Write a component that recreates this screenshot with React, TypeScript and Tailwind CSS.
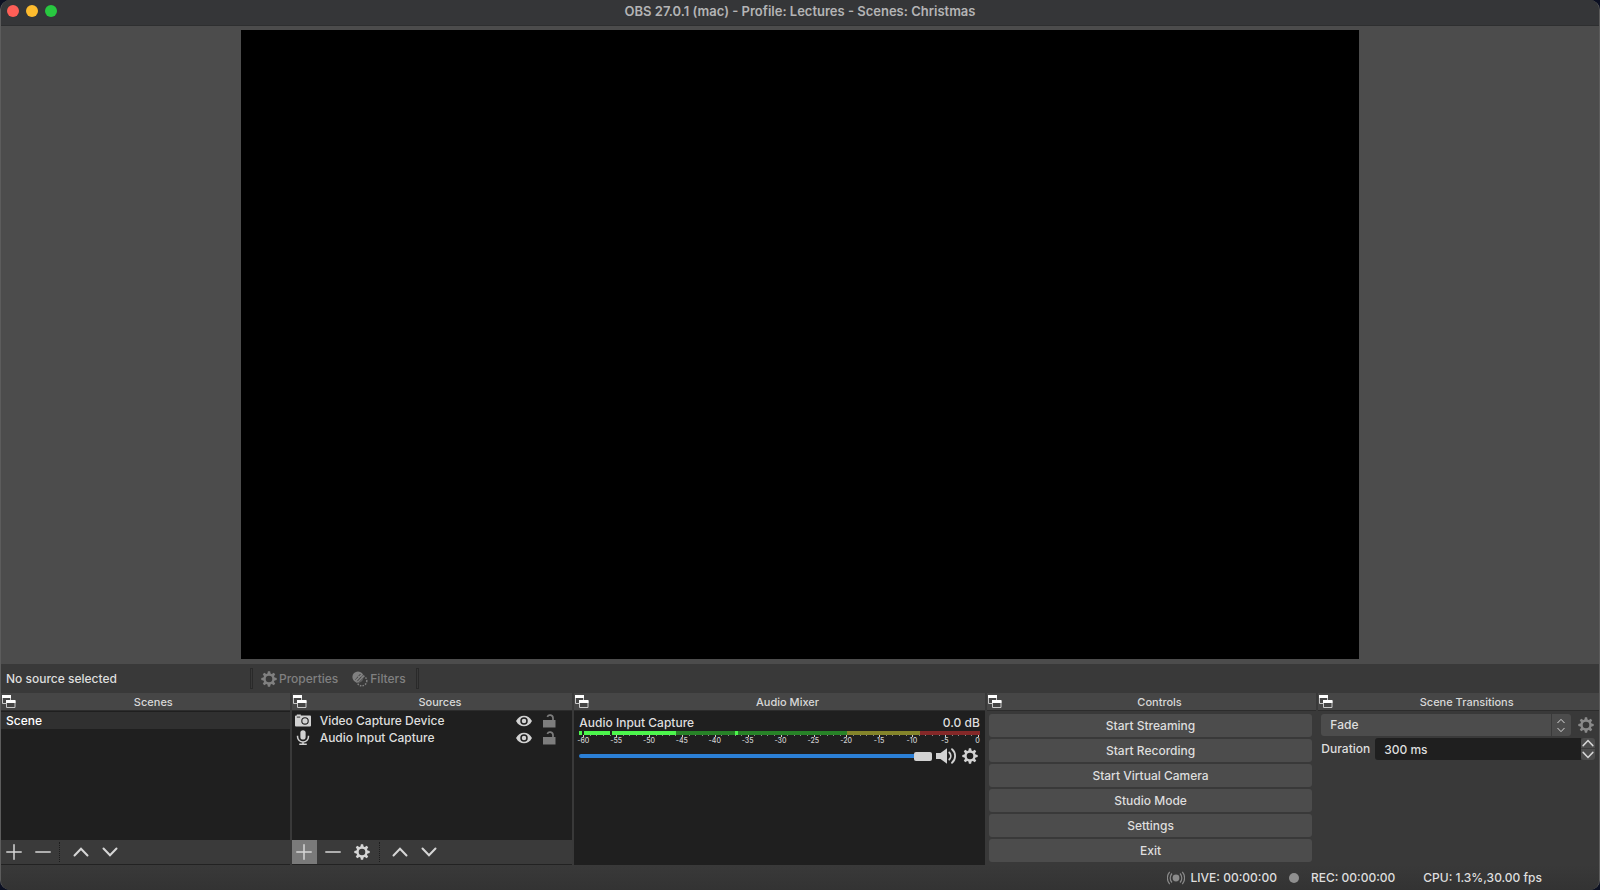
import React from "react";

type IconProps = { className?: string };

const GearIcon: React.FC<IconProps> = ({ className }) => (
  <svg viewBox="0 0 16 16" className={className} fill="currentColor" aria-hidden="true">
    {[0, 45, 90, 135, 180, 225, 270, 315].map((angle) => (
      <path key={angle} d="M6.3 3.4 6.9.3h2.2l.6 3.1z" transform={`rotate(${angle} 8 8)`} />
    ))}
    <circle cx="8" cy="8" r="4.5" fill="none" stroke="currentColor" strokeWidth="2.4" />
  </svg>
);

const FilterIcon: React.FC<IconProps> = ({ className }) => (
  <svg viewBox="0 0 16 16" className={className} aria-hidden="true">
    <circle cx="6" cy="6" r="5.6" fill="currentColor" />
    <path d="M3.5 8.5 8.5 3M5 10.5 10.5 4.5M7.5 11 11.5 7" stroke="#393939" strokeWidth="0.9" />
    <circle cx="9.8" cy="9.8" r="5" fill="none" stroke="currentColor" strokeWidth="1.5" strokeDasharray="1.5 1.2" />
  </svg>
);

const FloatIcon: React.FC<IconProps> = ({ className }) => (
  <svg viewBox="0 0 14 14" className={className} aria-hidden="true">
    <path d="M.5 1v7.5h8V1z" fill="#464646" stroke="#c8c8c8" />
    <path d="M0 0h9v3H0z" fill="#fff" />
    <path d="M4.5 6v6.5h8.5V6z" fill="#464646" stroke="#c8c8c8" />
    <path d="M4 5h9.5v3H4z" fill="#fff" />
  </svg>
);

const CameraIcon: React.FC<IconProps> = ({ className }) => (
  <svg viewBox="0 0 16 14" className={className} aria-hidden="true">
    <path d="M1 2h.8V1h4v1H15a1 1 0 0 1 1 1v9a1 1 0 0 1-1 1H1a1 1 0 0 1-1-1V3a1 1 0 0 1 1-1z" fill="#d2d2d2" />
    <path d="M1.8 3.6h3.4" stroke="#1f1f1f" strokeWidth="0.9" />
    <circle cx="10" cy="7.4" r="3.2" fill="none" stroke="#1f1f1f" strokeWidth="1.1" />
  </svg>
);

const MicIcon: React.FC<IconProps> = ({ className }) => (
  <svg viewBox="0 0 14 16" className={className} aria-hidden="true">
    <rect x="4.2" y="0.2" width="5.6" height="10" rx="2.8" fill="#d2d2d2" />
    <path d="M1.2 6v1.500a5.800 5.200 0 0 0 11.600 0V6M7 12.700V15M3 15.200h8" fill="none" stroke="#d2d2d2" strokeWidth="1.600" />
  </svg>
);

const EyeIcon: React.FC<IconProps> = ({ className }) => (
  <svg viewBox="0 0 16 12" className={className} aria-hidden="true">
    <path d="M0 6C2 2.3 4.8.7 8 .7S14 2.3 16 6c-2 3.7-4.8 5.3-8 5.3S2 9.7 0 6z" fill="#d2d2d2" />
    <circle cx="8" cy="6" r="3" fill="#d2d2d2" stroke="#1f1f1f" strokeWidth="1.5" />
  </svg>
);

const UnlockIcon: React.FC<IconProps> = ({ className }) => (
  <svg viewBox="0 0 13 14" className={className} aria-hidden="true">
    <path d="M0 6h12.5v7.5H0z" fill="#7d7d7d" />
    <path d="M10 6.5V4A3 3 0 0 0 4.3 2.8" fill="none" stroke="#7d7d7d" strokeWidth="1.7" />
  </svg>
);

const SpeakerIcon: React.FC<IconProps> = ({ className }) => (
  <svg viewBox="0 0 22 16" className={className} aria-hidden="true">
    <path d="M0 5h4.5L11 .3v15.4L4.5 11H0z" fill="#d2d2d2" />
    <path d="M13.3 4.5a5 5 0 0 1 0 7M16 1.2a9 9 0 0 1 0 13.6" fill="none" stroke="#d2d2d2" strokeWidth="1.8" strokeLinecap="round" />
  </svg>
);

const LiveIcon: React.FC<IconProps> = ({ className }) => (
  <svg viewBox="0 0 18 14" className={className} fill="none" stroke="#8a8a8a" strokeWidth="1.2" aria-hidden="true">
    <circle cx="9" cy="7" r="3.4" fill="#8a8a8a" stroke="none" />
    <path d="M5 2.5a6.5 6.5 0 0 0 0 9M13 2.5a6.5 6.5 0 0 1 0 9M2.7.8a9.5 9.5 0 0 0 0 12.4M15.3.8a9.5 9.5 0 0 1 0 12.4" />
  </svg>
);

const strokes = {
  plus: "M8 .8v14.4M.8 8h14.4",
  minus: "M.8 8h14.4",
  up: "M1.5 11.5 8 4.7l6.5 6.8",
  down: "M1.5 4.5 8 11.3l6.5-6.8",
};

const StrokeIcon: React.FC<{ name: keyof typeof strokes; className?: string }> = ({ name, className }) => (
  <svg viewBox="0 0 16 16" className={className} fill="none" stroke="#d6d6d6" strokeLinecap="round" strokeWidth={name === "up" || name === "down" ? 2 : 1.5} aria-hidden="true">
    <path d={strokes[name]} />
  </svg>
);

const ToolButton: React.FC<{ label: string; active?: boolean; children: React.ReactNode }> = ({ label, active, children }) => (
  <button type="button" aria-label={label} className={`flex h-6 w-[25px] items-center justify-center ${active ? "bg-[#7a7a7a]" : ""}`}>
    {children}
  </button>
);

const ListToolbar: React.FC<{ name: string; gear?: boolean }> = ({ name, gear }) => (
  <div className="flex h-[25px] shrink-0 items-center gap-1 border-b border-[#222222] bg-[#3a3a3a]">
    <ToolButton label={`Add ${name}`} active={gear}><StrokeIcon name="plus" className="size-4" /></ToolButton>
    <ToolButton label={`Remove ${name}`}><StrokeIcon name="minus" className="size-4" /></ToolButton>
    {gear && <ToolButton label={`${name} properties`}><GearIcon className="size-4 text-[#d6d6d6]" /></ToolButton>}
    <span className="mr-1 h-5 border-l border-dotted border-[#1c1c1c]" />
    <ToolButton label={`Move ${name} up`}><StrokeIcon name="up" className="size-4" /></ToolButton>
    <ToolButton label={`Move ${name} down`}><StrokeIcon name="down" className="size-4" /></ToolButton>
  </div>
);

const Dock: React.FC<{ title: string; children: React.ReactNode }> = ({ title, children }) => (
  <section className="flex min-w-0 flex-col">
    <header className="flex h-[18px] shrink-0 items-center border-b border-[#2c2c2c] bg-[#464646]">
      <button type="button" aria-label={`Float ${title}`} className="w-4 pl-px">
        <FloatIcon className="size-[14px]" />
      </button>
      <h2 className="flex-1 text-center text-[11px] font-medium leading-4 text-[#d8d8d8]">{title}</h2>
    </header>
    {children}
  </section>
);

const sources = [
  { name: "Video Capture Device", Icon: CameraIcon },
  { name: "Audio Input Capture", Icon: MicIcon },
];

const levels = [
  { width: 97, color: "#4cf54c" },
  { width: 59, color: "#278227" },
  { width: 3, color: "#4cf54c" },
  { width: 109, color: "#278227" },
  { width: 73, color: "#84842a" },
  { width: 60, color: "#842828" },
];

const marks = [-60, -55, -50, -45, -40, -35, -30, -25, -20, -15, -10, -5, 0];

const controls = ["Start Streaming", "Start Recording", "Start Virtual Camera", "Studio Mode", "Settings", "Exit"];

const VolumeMeter: React.FC = () => (
  <div>
    <div className="relative flex h-1">
      {levels.map((level, i) => (
        <span key={i} style={{ flex: `${level.width} 0 0px`, background: level.color }} />
      ))}
      <span className="absolute left-[3px] h-full w-0.5 bg-[#1f1f1f]" />
      <span className="absolute left-[31px] h-full w-0.5 bg-[#1f1f1f]" />
    </div>
    <div className="flex h-0.5 justify-between pl-1">
      {Array.from({ length: 61 }, (_, i) => (
        <span key={i} className={i % 5 === 0 ? "h-0.5 w-px bg-[#d0d0d0]" : "h-px w-px bg-[#8a8a8a]"} />
      ))}
    </div>
    <div className="flex justify-between pl-1 pr-0.5 text-[7px] leading-[7px] text-[#d0d0d0]">
      {marks.map((mark) => (
        <span key={mark} className="flex w-0 justify-center">{mark}</span>
      ))}
    </div>
  </div>
);

export default function App() {
  return (
    <div className="h-screen bg-[#0c1022] font-['Inter','Liberation_Sans',sans-serif] text-[12px] font-medium leading-4 text-[#dedede]">
      <div className="flex h-full flex-col overflow-hidden rounded-[10px] border-x border-[#5c5c5c] bg-[#393939]">
        <header className="flex h-[26px] shrink-0 items-center border-b border-[#2e2f30] bg-[#353638] px-1.5">
          <div className="flex flex-1 gap-[7px] pb-[3px]">
            <button type="button" aria-label="Close" className="size-3 rounded-full bg-[#ff5f57]" />
            <button type="button" aria-label="Minimize" className="size-3 rounded-full bg-[#febc2e]" />
            <button type="button" aria-label="Zoom" className="size-3 rounded-full bg-[#28c840]" />
          </div>
          <h1 className="pb-1 text-[13px] font-semibold text-[#b4b4b5]">OBS 27.0.1 (mac) - Profile: Lectures - Scenes: Christmas</h1>
          <div className="flex-1" />
        </header>

        <main className="flex min-h-0 flex-1 justify-center bg-[#4c4c4c] pt-1 pb-[5px]">
          <div className="aspect-video h-full bg-black" />
        </main>

        <div className="flex h-[29px] shrink-0 items-center">
          <p className="w-[249px] pl-[5px]">No source selected</p>
          <span className="h-[21px] w-[3px] border border-[#2a2a2a]" />
          <button type="button" disabled className="ml-2 flex items-center gap-0.5 text-[#808080]">
            <GearIcon className="size-4" />
            Properties
          </button>
          <button type="button" disabled className="ml-3.5 flex items-center gap-0.5 text-[#808080]">
            <FilterIcon className="size-4" />
            Filters
          </button>
          <span className="ml-2.5 h-[21px] w-[3px] border border-[#2a2a2a]" />
        </div>

        <div className="grid shrink-0 grid-cols-[289fr_281fr_411fr_330fr_281fr] gap-x-0.5">
          <Dock title="Scenes">
            <ul className="flex-1 bg-[#1f1f1f] pt-px">
              <li className="bg-[#303030] pl-[5px] leading-[17px] text-white">Scene</li>
            </ul>
            <ListToolbar name="scene" />
          </Dock>

          <Dock title="Sources">
            <ul className="flex-1 bg-[#1f1f1f] pt-px">
              {sources.map(({ name, Icon }) => (
                <li key={name} className="flex h-[17px] items-center pl-[3px] pr-4">
                  <Icon className="h-[15px] w-4" />
                  <span className="flex-1 truncate pl-[9px]">{name}</span>
                  <button type="button" aria-label={`Hide ${name}`}><EyeIcon className="h-3 w-4" /></button>
                  <button type="button" aria-label={`Lock ${name}`} className="ml-[11px]"><UnlockIcon className="h-[14px] w-[13px]" /></button>
                </li>
              ))}
            </ul>
            <ListToolbar name="source" gear />
          </Dock>

          <Dock title="Audio Mixer">
            <div className="flex-1 bg-[#1f1f1f] px-[5px] pt-1">
              <div className="flex justify-between">
                <label htmlFor="volume">Audio Input Capture</label>
                <span>0.0 dB</span>
              </div>
              <VolumeMeter />
              <div className="flex items-center pt-1 pr-0.5">
                <input
                  id="volume"
                  type="range"
                  defaultValue={100}
                  className="h-1 min-w-0 flex-1 appearance-none rounded-full bg-[#2b7fd6] [&::-webkit-slider-thumb]:h-[9px] [&::-webkit-slider-thumb]:w-[18px] [&::-webkit-slider-thumb]:appearance-none [&::-webkit-slider-thumb]:rounded-[2px] [&::-webkit-slider-thumb]:bg-[#d2d2d2]"
                />
                <button type="button" aria-label="Mute" className="ml-1"><SpeakerIcon className="h-4 w-[22px]" /></button>
                <button type="button" aria-label="Audio settings" className="ml-1"><GearIcon className="size-4 text-[#d2d2d2]" /></button>
              </div>
            </div>
          </Dock>

          <Dock title="Controls">
            <div className="flex flex-col gap-0.5 py-[3px] pr-1 pl-0.5">
              {controls.map((label) => (
                <button key={label} type="button" className="h-[23px] rounded-[3px] bg-[#4c4c4c]">{label}</button>
              ))}
            </div>
          </Dock>

          <Dock title="Scene Transitions">
            <div className="flex flex-col gap-0.5 py-[3px] pr-1 pl-[3px]">
              <div className="flex items-center">
                <div className="relative flex-1">
                  <select aria-label="Transition" className="block h-[22px] w-full appearance-none rounded-[3px] bg-[#4c4c4c] px-[9px] leading-[22px]">
                    <option>Fade</option>
                  </select>
                  <span className="pointer-events-none absolute inset-y-0 right-0 flex w-5 flex-col items-center justify-center gap-px border-l border-[#3a3a3a]">
                    <StrokeIcon name="up" className="size-2" />
                    <StrokeIcon name="down" className="size-2" />
                  </span>
                </div>
                <button type="button" aria-label="Transition properties" className="mr-px ml-[7px]">
                  <GearIcon className="size-4 text-[#8a8a8a]" />
                </button>
              </div>
              <div className="flex items-center">
                <label htmlFor="duration" className="pr-[5px]">Duration</label>
                <input id="duration" type="text" defaultValue="300 ms" className="h-[22px] min-w-0 flex-1 rounded-l-[3px] bg-[#1f1f1f] px-[9px]" />
                <div className="flex flex-col">
                  <button type="button" aria-label="Increase duration" className="flex h-[11px] w-[14px] items-center justify-center rounded-t-[3px] border-b border-[#3a3a3a] bg-[#4c4c4c]">
                    <StrokeIcon name="up" className="size-3" />
                  </button>
                  <button type="button" aria-label="Decrease duration" className="flex h-[11px] w-[14px] items-center justify-center rounded-b-[3px] bg-[#4c4c4c]">
                    <StrokeIcon name="down" className="size-3" />
                  </button>
                </div>
              </div>
            </div>
          </Dock>
        </div>

        <footer className="flex h-[25px] shrink-0 items-center justify-end bg-linear-to-b from-[#393939] to-[#333333] pr-[57px]">
          <LiveIcon className="h-[14px] w-[18px]" />
          <span className="ml-1.5">LIVE: 00:00:00</span>
          <span className="mx-3 size-2.5 rounded-full bg-[#8f8f8f]" />
          <span>REC: 00:00:00</span>
          <span className="ml-7">CPU: 1.3%,30.00 fps</span>
        </footer>
      </div>
    </div>
  );
}
